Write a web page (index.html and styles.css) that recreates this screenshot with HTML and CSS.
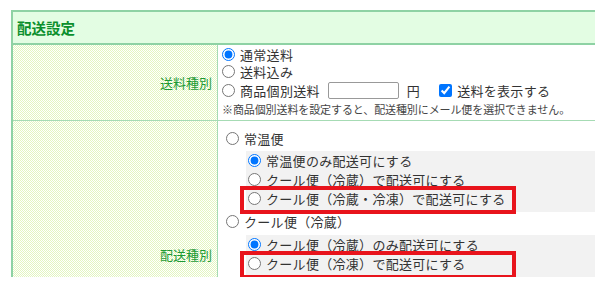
FILE: index.html
```html
<!DOCTYPE html>
<html lang="ja">
  <head>
    <meta charset="UTF-8" />
    <title>配送設定</title>
    <link rel="stylesheet" href="styles.css">
  </head>
  <body>
    <table class="settings">
      <colgroup>
        <col class="col-label">
        <col class="col-field">
      </colgroup>
      <tr>
        <th class="head" colspan="2">配送設定</th>
      </tr>
      <tr class="row-fee">
        <th class="label">送料種別</th>
        <td class="field">
          <label class="opt"><input type="radio" name="fee" checked>通常送料</label>
          <label class="opt"><input type="radio" name="fee">送料込み</label>
          <div class="opt opt-input">
            <label class="opt"><input type="radio" name="fee">商品個別送料</label>
            <input type="text" class="price">
            <span class="unit">円</span>
            <label class="opt"><input type="checkbox" checked>送料を表示する</label>
          </div>
          <div class="note">※商品個別送料を設定すると、配送種別にメール便を選択できません。</div>
        </td>
      </tr>
      <tr class="row-ship">
        <th class="label label-bottom">配送種別</th>
        <td class="field field-ship">
          <label class="opt opt-main"><input type="radio" name="ship">常温便</label>
          <div class="sub">
            <label class="opt"><input type="radio" name="normal" checked>常温便のみ配送可にする</label>
            <label class="opt"><input type="radio" name="normal">クール便（冷蔵）で配送可にする</label>
            <label class="opt marked"><input type="radio" name="normal">クール便（冷蔵・冷凍）で配送可にする</label>
          </div>
          <label class="opt opt-main"><input type="radio" name="ship">クール便（冷蔵）</label>
          <div class="sub">
            <label class="opt"><input type="radio" name="cool" checked>クール便（冷蔵）のみ配送可にする</label>
            <label class="opt marked"><input type="radio" name="cool">クール便（冷凍）で配送可にする</label>
          </div>
        </td>
      </tr>
    </table>
  </body>
</html>
```

FILE: styles.css
```css
body {
  margin: 0;
  font-family: "Noto Sans CJK JP", "Liberation Sans", sans-serif;
  color: #333;
  background: #fff;
}
.settings {
  margin: 10px 0 0 11px;
  width: 584px;
  border-spacing: 0;
  border-top: 2px solid #8ed2a4;
  border-left: 2px solid #8ed2a4;
  table-layout: fixed;
}
.col-label {
  width: 205px;
}
.head {
  height: 31px;
  padding: 0 0 0 4px;
  text-align: left;
  font-size: 14.5px;
  font-weight: bold;
  color: #0a8f2c;
  background: #e3fde3;
  border-bottom: 2px solid #8ed2a4;
}
.label {
  padding: 0 5px 0 0;
  text-align: right;
  vertical-align: middle;
  font-size: 13px;
  font-weight: normal;
  color: #1d9a34;
  border-right: 1px solid #a6dbb4;
  background: #fff url("data:image/svg+xml,%3Csvg xmlns='http://www.w3.org/2000/svg' width='2' height='2' shape-rendering='crispEdges'%3E%3Crect width='1' height='1' fill='%23e3f6c0'/%3E%3Crect x='1' y='1' width='1' height='1' fill='%23e3f6c0'/%3E%3C/svg%3E") 0 0 / 2px 2px repeat;
}
.label-bottom {
  vertical-align: bottom;
  padding-bottom: 13px;
}
.row-fee .label,
.row-fee .field {
  border-bottom: 1px solid #a6dbb4;
}
.field {
  padding: 1px 0 3px 4px;
  vertical-align: top;
  font-size: 13px;
  letter-spacing: 0.3px;
}
.opt {
  display: flex;
  align-items: center;
  gap: 5px;
  height: 17px;
  line-height: 17px;
  white-space: nowrap;
}
.opt input {
  margin: 0;
  width: 13px;
  height: 13px;
  flex: none;
}
.opt-input {
  height: 21px;
  gap: 0;
}
.opt .price {
  margin: 0 0 0 8px;
  width: 71px;
  height: 17px;
  box-sizing: border-box;
  border: 1px solid #999;
  border-radius: 2px;
}
.unit {
  margin: 0 19px 0 8px;
}
.note {
  font-size: 11px;
  line-height: 16px;
  letter-spacing: -0.1px;
  color: #444;
  white-space: nowrap;
}
.field-ship {
  padding: 8px 0 0 8px;
}
.opt-main {
  height: 19px;
  line-height: 19px;
}
.sub {
  margin: 3px 0 0 20px;
  padding: 0 0 4px 2px;
  background: #f2f2f2;
}
.opt-main + .sub + .opt-main + .sub {
  margin-top: 4px;
}
.sub .opt {
  height: 19px;
  line-height: 19px;
}
.marked {
  position: relative;
}
.marked::after {
  content: "";
  position: absolute;
  left: -8px;
  top: -3px;
  width: 276px;
  height: 28px;
  box-sizing: border-box;
  border: 4px solid #e8141c;
}
```
